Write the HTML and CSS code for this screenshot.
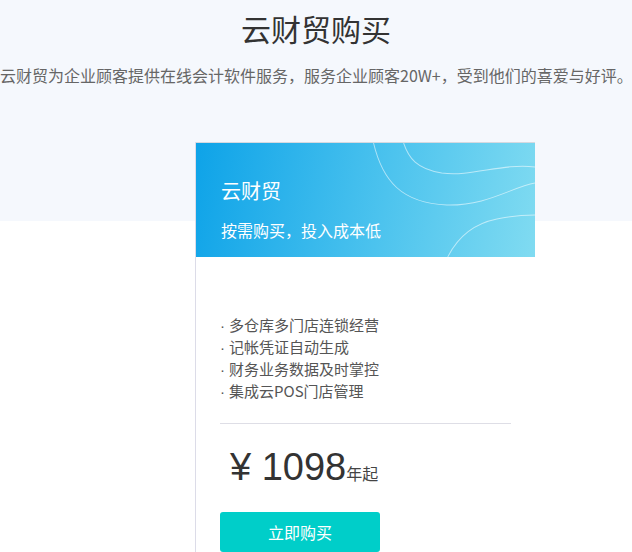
FILE: index.html
```html
<!DOCTYPE html>
<html lang="zh-CN">
<head>
    <meta charset="UTF-8">
    <meta name="viewport" content="width=device-width, initial-scale=1.0">
    <title>云财贸购买</title>
    <link rel="stylesheet" href="styles.css">
</head>
<body>
    <div class="intro">
        <h1>云财贸购买</h1>
        <p class="intro-text">云财贸为企业顾客提供在线会计软件服务，服务企业顾客20W+，受到他们的喜爱与好评。</p>
    </div>

    <div class="plans">
        <div class="plan">
            <div class="plan-head">
                <svg class="waves" viewBox="0 0 338 114" preserveAspectRatio="none">
                    <path d="M207,0 C212,15 220,26 245,30 C275,34 305,20 338,24" />
                    <path d="M177,0 C186,38 205,60 250,62 C290,63 315,44 338,40" />
                    <path d="M251,114 C262,92 280,80 300,76 C318,72 330,72 338,72" />
                </svg>
                <h2>云财贸</h2>
                <p>按需购买，投入成本低</p>
            </div>
            <div class="plan-body">
                <ul class="features">
                    <li><span class="dot">·</span>多仓库多门店连锁经营</li>
                    <li><span class="dot">·</span>记帐凭证自动生成</li>
                    <li><span class="dot">·</span>财务业务数据及时掌控</li>
                    <li><span class="dot">·</span>集成云POS门店管理</li>
                </ul>
                <div class="price">
                    <span class="amount">¥ 1098</span><span class="unit">年起</span>
                </div>
                <button class="buy">立即购买</button>
            </div>
        </div>
    </div>
</body>
</html>
```

FILE: styles.css
```css
body {
    font-family: "Noto Sans CJK SC", "Liberation Sans", sans-serif;
    margin: 0;
    padding: 0;
    background-color: #fff;
    color: #333;
}

.intro {
    background-color: #f5f8fd;
    height: 221px;
    padding-top: 8px;
    box-sizing: border-box;
    text-align: center;
}

.intro h1 {
    font-size: 30px;
    font-weight: normal;
    line-height: 40px;
    margin: 0;
    color: #333;
}

.intro-text {
    font-size: 16px;
    line-height: 24px;
    margin: 15px 0 0;
    color: #666;
    white-space: nowrap;
}

.plans {
    display: flex;
    margin-top: -79px;
    padding-left: 195px;
}

.plan {
    width: 339px;
    border-left: 1px solid #dcdce8;
    background-color: #fff;
}

.plan-head {
    position: relative;
    border-top: 1px solid #d6d9e0;
    padding: 34px 0 0 25px;
    height: 80px;
    background: linear-gradient(100deg, #0ea3e8 0%, #4cc3ee 55%, #80dbf1 100%);
    color: #fff;
    overflow: hidden;
}

.waves {
    position: absolute;
    top: 0;
    left: 0;
    width: 100%;
    height: 100%;
    fill: none;
    stroke: rgba(255, 255, 255, 0.55);
    stroke-width: 1;
}

.plan-head h2 {
    position: relative;
    font-size: 20px;
    font-weight: normal;
    line-height: 28px;
    margin: 0;
}

.plan-head p {
    position: relative;
    font-size: 16px;
    line-height: 24px;
    margin: 13px 0 0;
}

.plan-body {
    padding: 57px 24px 0 24px;
}

.features {
    list-style: none;
    margin: 0;
    padding: 0 0 21px;
    border-bottom: 1px solid #dedee6;
    font-size: 15px;
    line-height: 22px;
    color: #555;
}

.features li {
    height: 22px;
}

.dot {
    font-family: "Liberation Sans", sans-serif;
    display: inline-block;
    width: 9px;
}

.price {
    margin-top: 19px;
    padding-left: 10px;
    line-height: 48px;
    color: #333;
}

.amount {
    font-family: "Liberation Sans", "Noto Sans CJK SC", sans-serif;
    font-size: 38px;
}

.unit {
    font-size: 16px;
    color: #444;
}

.buy {
    display: block;
    width: 160px;
    height: 40px;
    margin-top: 15px;
    border: none;
    border-radius: 3px;
    background-color: #00cec9;
    color: #fff;
    font-family: inherit;
    font-size: 16px;
    cursor: pointer;
}
```
